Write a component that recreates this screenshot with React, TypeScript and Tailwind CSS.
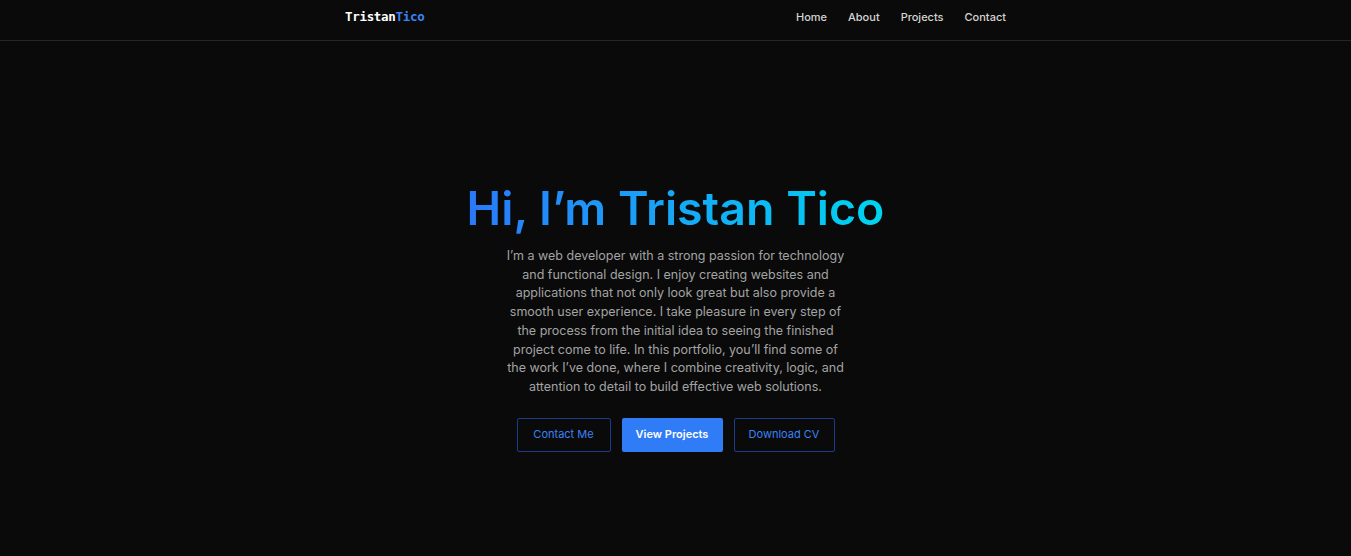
const navLinks = ["Home", "About", "Projects", "Contact"];

export default function App() {
  return (
    <div className="min-h-screen bg-[#0a0a0a] font-['Inter',sans-serif] text-white">
      <header className="h-[41px] border-b border-[#262626]">
        <div className="mx-auto flex h-[35px] w-[661px] items-center justify-between">
          <a href="#" className="font-['DejaVu_Sans_Mono',monospace] text-[12.5px] font-bold tracking-tight text-white">
            Tristan<span className="text-[#3b82f6]">Tico</span>
          </a>
          <nav className="flex items-center gap-[21px] text-[11px] font-medium text-[#d4d4d4]">
            {navLinks.map((link) => (
              <a key={link} href={`#${link.toLowerCase()}`} className="hover:text-white">
                {link}
              </a>
            ))}
          </nav>
        </div>
      </header>

      <main className="flex flex-col items-center pt-[140px] text-center">
        <h1 className="bg-gradient-to-r from-[#2a78fa] to-[#00d4f0] bg-clip-text text-[46.5px] font-semibold leading-[54px] tracking-[0px] text-transparent">
          Hi, I’m Tristan Tico
        </h1>
        <p className="mt-[12px] w-[345px] text-[12.5px] leading-[18.7px] text-[#a3a3a3]">
          I’m a web developer with a strong passion for technology and functional design. I enjoy creating websites and
          applications that not only look great but also provide a smooth user experience. I take pleasure in every step
          of the process from the initial idea to seeing the finished project come to life. In this portfolio, you’ll find
          some of the work I’ve done, where I combine creativity, logic, and attention to detail to build effective web
          solutions.
        </p>
        <div className="mt-[21px] flex items-center gap-[11px] text-[11px]">
          <a href="#contact" className="flex h-[34px] w-[94px] items-center justify-center rounded-[2px] border border-[#1e3a8a] text-[#3b82f6]">
            Contact Me
          </a>
          <a href="#projects" className="flex h-[34px] w-[101px] items-center justify-center rounded-[2px] bg-[#2f7cf6] font-semibold text-white">
            View Projects
          </a>
          <a href="#" className="flex h-[34px] w-[101px] items-center justify-center rounded-[2px] border border-[#1e3a8a] text-[#3b82f6]">
            Download CV
          </a>
        </div>
      </main>
    </div>
  );
}
